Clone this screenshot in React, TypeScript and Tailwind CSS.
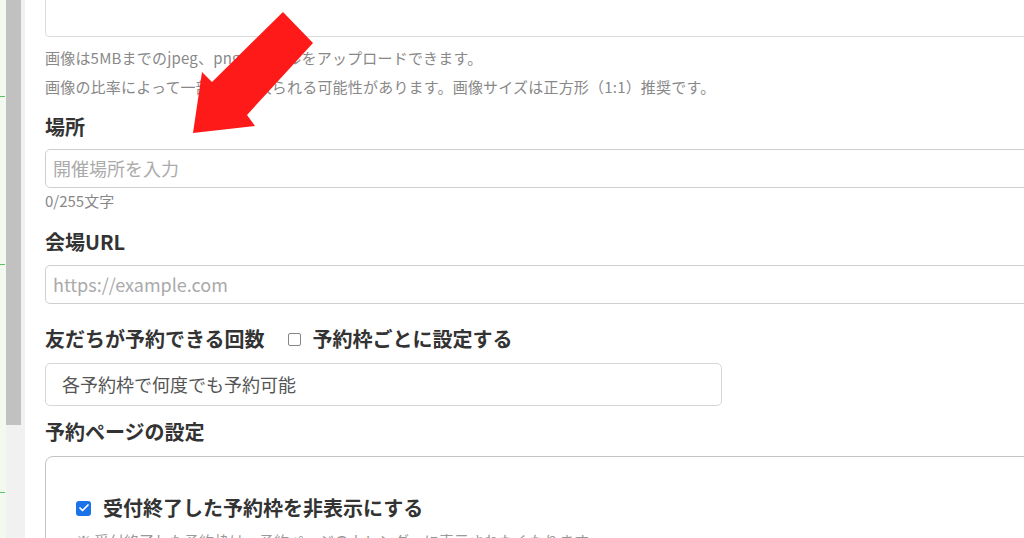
import { Check } from "lucide-react";

const font = "font-['Noto_Sans_CJK_JP','Noto_Sans',sans-serif]";

function Label({ children }: { children: React.ReactNode }) {
  return <div className="text-[20px] leading-[28px] font-bold text-[#333]">{children}</div>;
}

export default function App() {
  return (
    <div className={`relative w-[1024px] h-[538px] overflow-hidden bg-white flex ${font}`}>
      {/* left edge */}
      <div className="w-[6px] shrink-0 bg-[#f2faef] flex flex-col">
        <div className="mt-[96px] h-px w-[5px] bg-[#5cc05c]" />
        <div className="mt-[167px] h-px w-[5px] bg-[#5cc05c]" />
        <div className="mt-[227px] h-px w-[5px] bg-[#5cc05c]" />
      </div>
      {/* scrollbar */}
      <div className="w-[19px] shrink-0 bg-[#f1f1f1]">
        <div className="w-[15px] h-[425px] bg-[#c1c1c1]" />
      </div>

      {/* form */}
      <div className="flex-1 min-w-0 pl-[20px]">
        <div className="w-[1100px] flex flex-col">
          <div className="-mt-[23px] h-[60px] border border-[#dcdcdc] rounded-sm" />

          <div className="mt-[6px] text-[15px] leading-[29px] text-[#888] tracking-[0.2px]">
            <p>画像は5MBまでのjpeg、pngファイルをアップロードできます。</p>
            <p>画像の比率によって一部が切り取られる可能性があります。画像サイズは正方形（1:1）推奨です。</p>
          </div>

          <div className="mt-[12px]">
            <Label>場所</Label>
          </div>
          <div className="mt-[8px] h-[39px] border border-[#cfcfcf] rounded-[5px] flex items-center pl-[7px] text-[18px] text-[#aaa]">
            開催場所を入力
          </div>
          <div className="mt-[3px] text-[15px] leading-[20px] text-[#888]">0/255文字</div>

          <div className="mt-[17px]">
            <Label>会場URL</Label>
          </div>
          <div className="mt-[9px] h-[39px] border border-[#cfcfcf] rounded-[5px] flex items-center pl-[7px] text-[18px] text-[#aaa]">
            https://example.com
          </div>

          <div className="mt-[21px] flex items-center">
            <Label>友だちが予約できる回数</Label>
            <div className="ml-[23px] w-[13px] h-[13px] border border-[#858585] rounded-[2px]" />
            <div className="ml-[12px]">
              <Label>予約枠ごとに設定する</Label>
            </div>
          </div>
          <div className="mt-[10px] w-[677px] h-[43px] border border-[#d6d6d6] rounded-[5px] flex items-center pl-[16px] text-[18px] text-[#555]">
            各予約枠で何度でも予約可能
          </div>

          <div className="mt-[12px]">
            <Label>予約ページの設定</Label>
          </div>
          <div className="mt-[10px] h-[200px] border-[1.5px] border-[#c4c4c4] rounded-lg pl-[30px] pt-[37px]">
            <div className="flex items-center">
              <div className="w-[15px] h-[15px] rounded-[3px] bg-[#1a73e8] flex items-center justify-center">
                <Check size={12} strokeWidth={3.5} className="text-white" />
              </div>
              <div className="ml-[12px]">
                <Label>受付終了した予約枠を非表示にする</Label>
              </div>
            </div>
            <p className="mt-[8px] text-[15px] leading-[22px] text-[#999]">
              ※ 受付終了した予約枠は、予約ページのカレンダーに表示されなくなります。
            </p>
          </div>
        </div>
      </div>

      {/* red arrow */}
      <svg className="absolute left-0 top-0" width="1024" height="538" viewBox="0 0 1024 538">
        <polygon
          points="283,12 313,43 247,115 255,126 193,133 202,72 212,82"
          fill="#ff1a1a"
        />
      </svg>
    </div>
  );
}
